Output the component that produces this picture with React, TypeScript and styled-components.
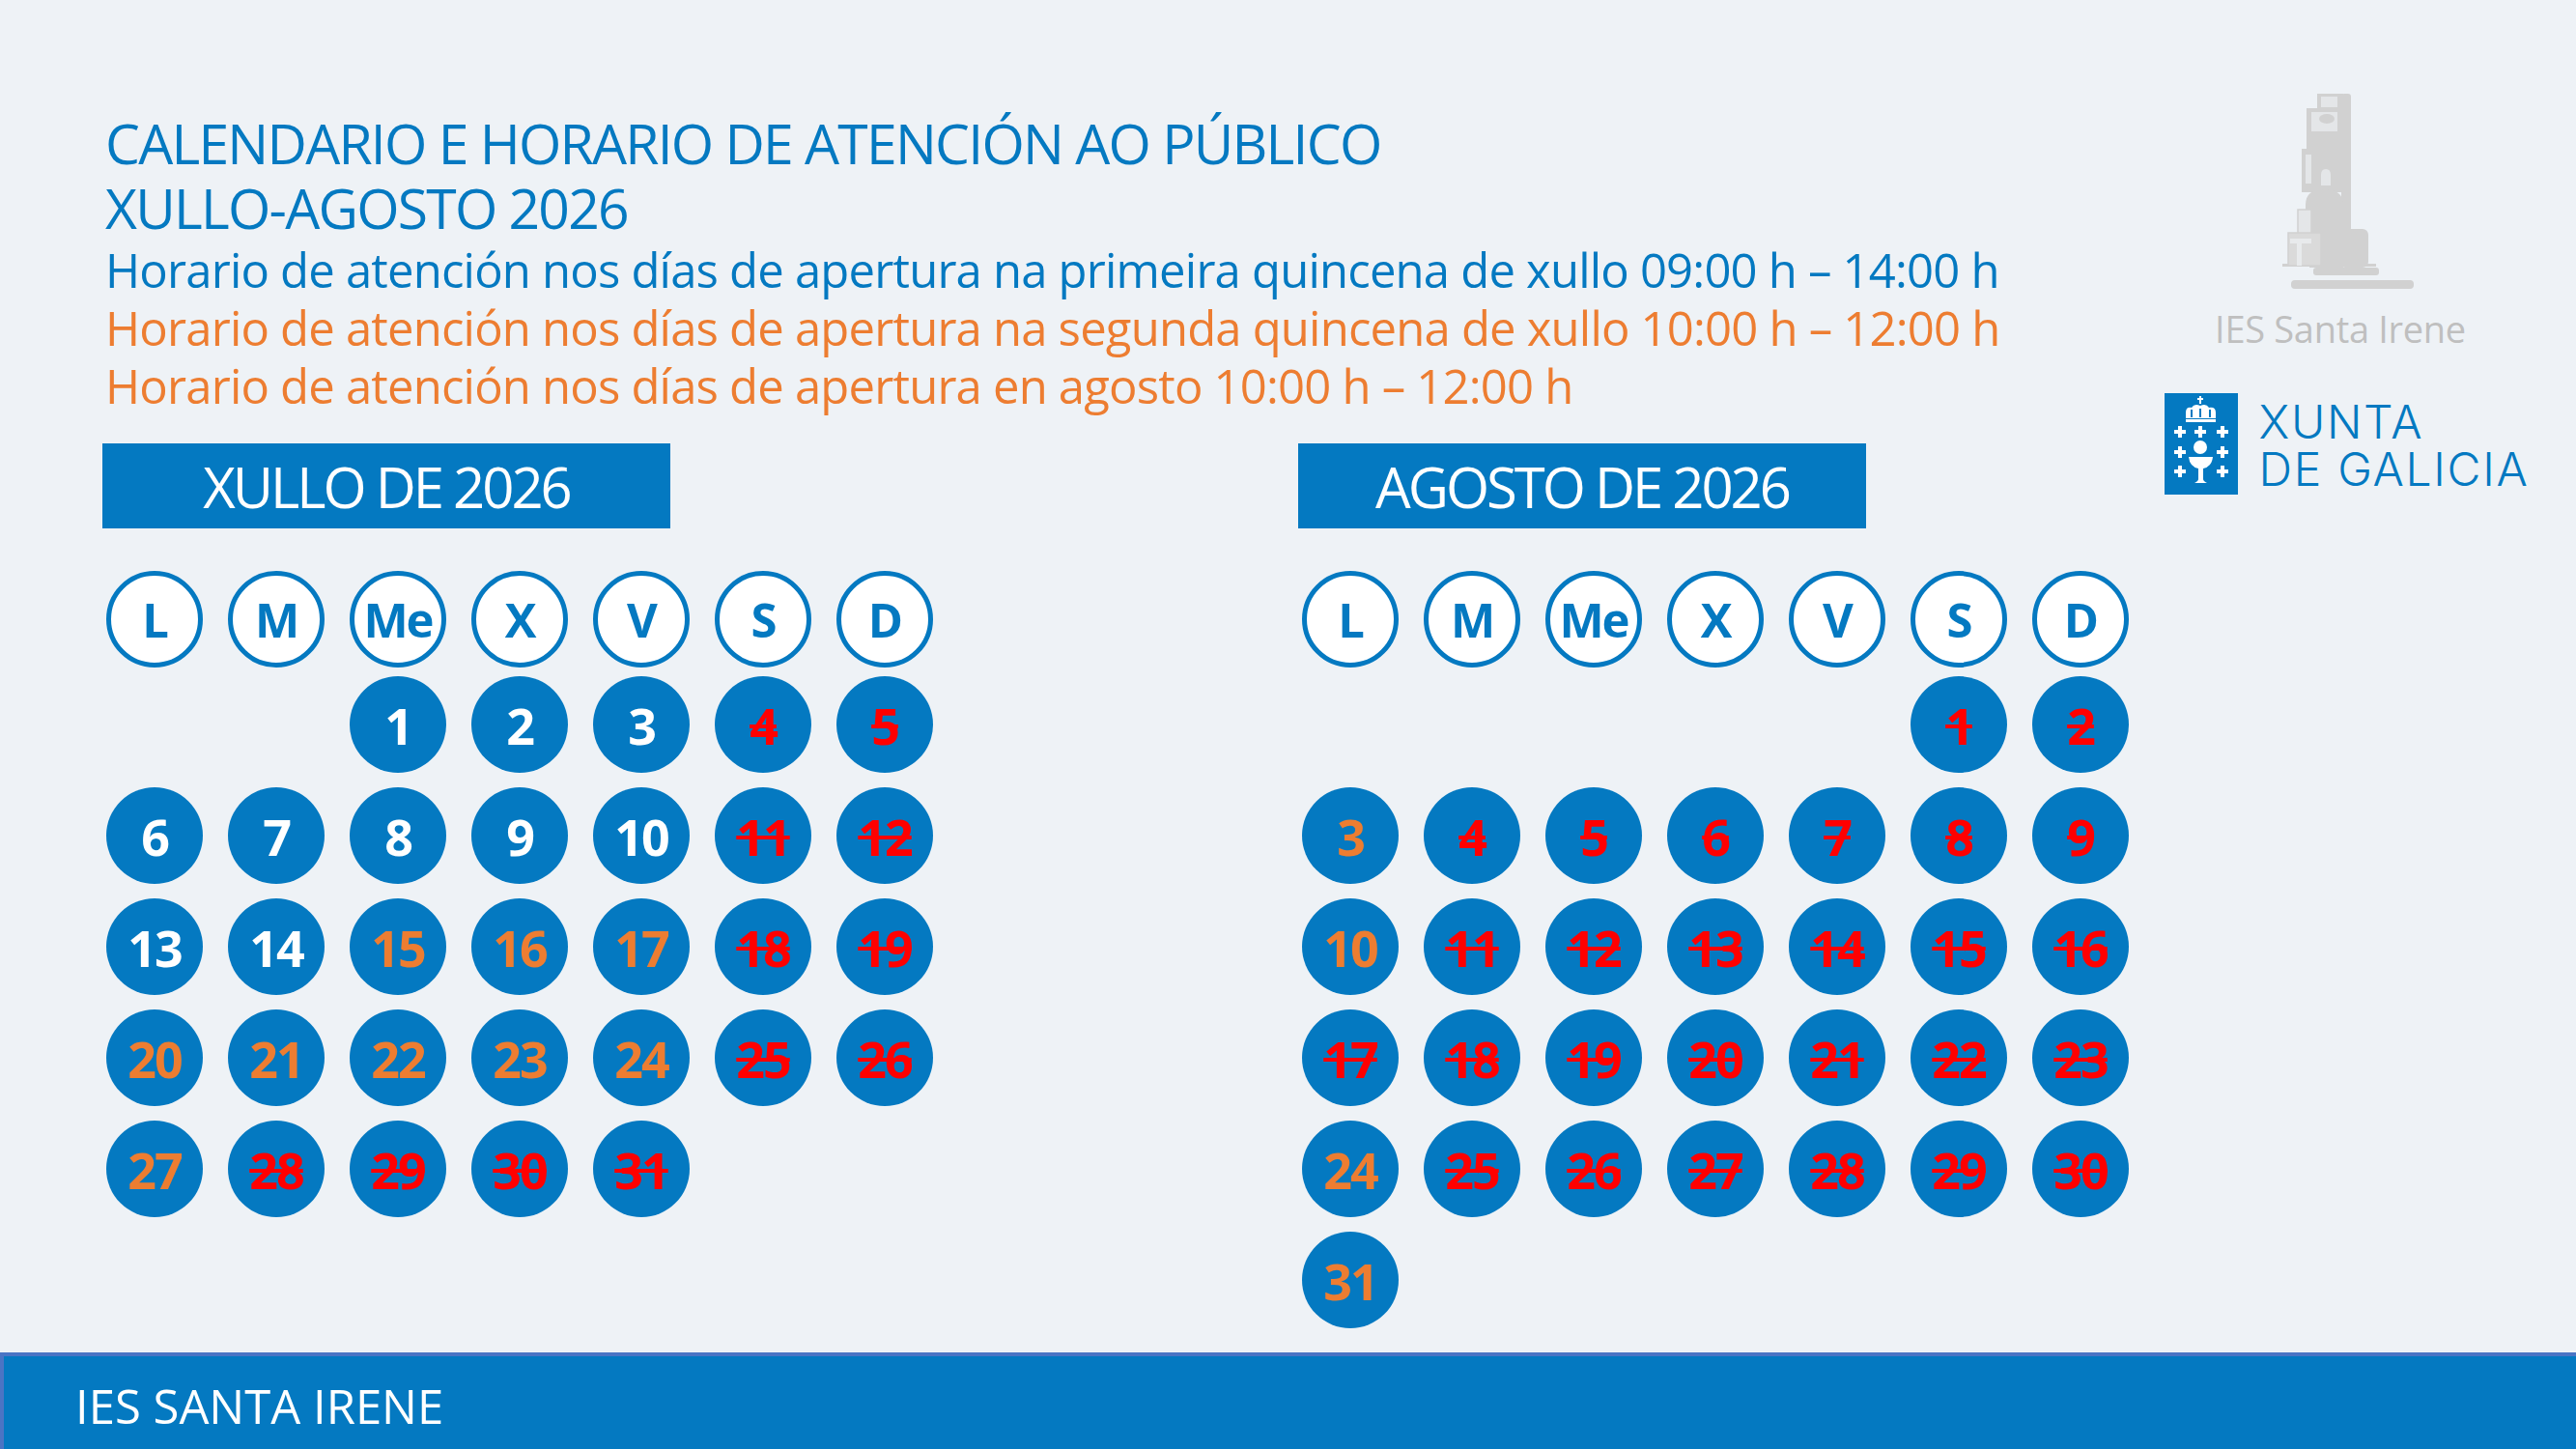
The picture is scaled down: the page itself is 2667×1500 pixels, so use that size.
import React from 'react';
import styled, { createGlobalStyle } from 'styled-components';

const BLUE = '#0479c1';
const ORANGE = '#ed7d31';
const RED = '#ff0000';

const GlobalStyle = createGlobalStyle`
    html, body {
        margin: 0;
        padding: 0;
        background: #eef2f6;
    }
    body {
        font-family: 'Open Sans', 'Noto Sans', sans-serif;
    }
`;

const Page = styled.div`
    width: 2667px;
    height: 1500px;
    display: flex;
    flex-direction: column;
    background: #eef2f6;
    overflow: hidden;
`;

const Main = styled.div`
    flex: 1;
    display: flex;
`;

const Content = styled.div`
    flex: 1;
    padding: 115px 0 0 106px;
`;

const Heading = styled.header`
    margin-left: 3px;
`;

const Title = styled.h1`
    margin: 0;
    font-size: 57px;
    line-height: 67px;
    font-weight: 400;
    letter-spacing: -1.75px;
    color: ${BLUE};
`;

const Schedule = styled.p<{ $tone: 'blue' | 'orange' }>`
    margin: 0;
    font-size: 49px;
    line-height: 60px;
    letter-spacing: -0.8px;
    color: ${p => (p.$tone === 'blue' ? BLUE : ORANGE)};
`;

const Calendars = styled.div`
    display: grid;
    grid-template-columns: 1238px 1fr;
    margin-top: 30px;
`;

const Month = styled.section`
    display: flex;
    flex-direction: column;
`;

const MonthTitle = styled.h2`
    margin: 0;
    width: 588px;
    height: 88px;
    box-sizing: border-box;
    display: flex;
    align-items: center;
    justify-content: center;
    background: ${BLUE};
    color: #fff;
    font-size: 58px;
    font-weight: 400;
    letter-spacing: -3px;
`;

const WeekHeader = styled.div`
    display: grid;
    grid-template-columns: repeat(7, 100px);
    column-gap: 26px;
    margin: 44px 0 9px 4px;
`;

const WeekDay = styled.div`
    width: 100px;
    height: 100px;
    box-sizing: border-box;
    border-radius: 50%;
    border: 5px solid ${BLUE};
    background: #fff;
    display: flex;
    align-items: center;
    justify-content: center;
    color: ${BLUE};
    font-size: 49px;
    font-weight: 700;
    letter-spacing: -2px;
`;

const DaysGrid = styled.div`
    display: grid;
    grid-template-columns: repeat(7, 100px);
    column-gap: 26px;
    row-gap: 15px;
    margin-left: 4px;
`;

type DayKind = 'open' | 'late' | 'closed';

const dayColors: Record<DayKind, string> = {
    open: '#ffffff',
    late: ORANGE,
    closed: RED,
};

const Day = styled.div<{ $kind: DayKind; $start?: number }>`
    width: 100px;
    height: 100px;
    border-radius: 50%;
    background: ${BLUE};
    display: flex;
    align-items: center;
    justify-content: center;
    grid-column-start: ${p => p.$start ?? 'auto'};
    color: ${p => dayColors[p.$kind]};
    font-size: 52px;
    font-weight: 700;
    letter-spacing: -2px;
    text-decoration: ${p => (p.$kind === 'closed' ? 'line-through' : 'none')};
    text-decoration-thickness: 4px;
    text-decoration-color: ${RED};
`;

const Aside = styled.aside`
    width: 400px;
    margin-right: 37px;
    padding-top: 90px;
    display: flex;
    flex-direction: column;
    align-items: center;
`;

const SchoolName = styled.div`
    margin: 7px 14px 0 0;
    font-size: 38px;
    line-height: 46px;
    letter-spacing: -0.3px;
    color: #bfbfbf;
`;

const Xunta = styled.div`
    margin-top: 44px;
    display: flex;
    align-items: flex-start;
    gap: 21px;
`;

const XuntaText = styled.div`
    padding-top: 5px;
    font-family: Inter, 'Noto Sans', sans-serif;
    font-weight: 300;
    font-size: 48px;
    line-height: 49px;
    letter-spacing: 1.7px;
    color: ${BLUE};
`;

const Footer = styled.footer`
    height: 100px;
    box-sizing: border-box;
    border: 4px solid #4a74c4;
    border-right: none;
    border-bottom: none;
    background: ${BLUE};
    display: flex;
    align-items: center;
    padding: 6px 0 0 74px;
    color: #fff;
    font-size: 49px;
`;

const WEEKDAYS = ['L', 'M', 'Me', 'X', 'V', 'S', 'D'];

interface MonthData {
    title: string;
    start: number; // weekday column of day 1
    length: number;
    late: number[];
    open: number[];
}

const months: MonthData[] = [
    {
        title: 'XULLO DE 2026',
        start: 3,
        length: 31,
        open: [1, 2, 3, 6, 7, 8, 9, 10, 13, 14],
        late: [15, 16, 17, 20, 21, 22, 23, 24, 27],
    },
    {
        title: 'AGOSTO DE 2026',
        start: 6,
        length: 31,
        open: [],
        late: [3, 10, 24, 31],
    },
];

const kindOf = (m: MonthData, d: number): DayKind =>
    m.open.includes(d) ? 'open' : m.late.includes(d) ? 'late' : 'closed';

const Tower = () => (
    <svg width="160" height="220" viewBox="0 0 160 220">
        <g fill="#d1d1d1">
            <rect x="74" y="7" width="10" height="142" rx="3" />
            <rect x="49" y="7" width="27" height="17" />
            <rect x="38" y="22" width="40" height="43" />
            <rect x="33" y="64" width="47" height="45" />
            <path d="M37 142 V122 Q37 106 56 106 Q76 106 76 122 V142 Z" />
            <rect x="41" y="127" width="35" height="60" />
            <rect x="72" y="147" width="30" height="40" rx="6" />
            <rect x="13" y="183" width="97" height="3" />
            <rect x="45" y="187" width="68" height="8" rx="3" />
            <rect x="22" y="200" width="127" height="9" rx="4" />
        </g>
        <g fill="#e4e6e8">
            <rect x="53" y="10" width="17" height="11" />
            <rect x="43" y="26" width="27" height="20" />
            <rect x="37" y="70" width="6" height="30" />
            <path d="M53 102 V91 Q53 85 58 85 Q63 85 63 91 V102 Z" />
        </g>
        <ellipse cx="59" cy="33" rx="8" ry="5" fill="#d1d1d1" />
        <rect x="29" y="127" width="14" height="25" fill="#e4e6e8" stroke="#d1d1d1" strokeWidth="1.5" />
        <rect x="19" y="151" width="34" height="34" fill="#dadada" stroke="#d1d1d1" strokeWidth="1.5" />
        <g fill="#e8eaec">
            <rect x="21" y="157" width="22" height="5" />
            <rect x="28" y="157" width="5" height="28" />
        </g>
    </svg>
);

const Plus = ({ x, y }: { x: number; y: number }) => (
    <g fill="#fff">
        <rect x={x - 6} y={y - 2} width="12" height="4" />
        <rect x={x - 2} y={y - 6} width="4" height="12" />
    </g>
);

const Emblem = () => (
    <svg width="76" height="105" viewBox="0 0 76 105">
        <rect width="76" height="105" fill={BLUE} />
        <rect x="36" y="3" width="2" height="8" fill="#fff" />
        <rect x="34" y="5" width="6" height="2" fill="#fff" />
        <path
            d="M22 26 V20 Q22 14 28 15 Q31 10 37 13 Q43 10 46 15 Q53 14 53 20 V26 Z"
            fill="#fff"
        />
        <g fill={BLUE}>
            <rect x="27" y="17" width="2" height="8" />
            <rect x="36" y="16" width="2" height="9" />
            <rect x="46" y="17" width="2" height="8" />
        </g>
        <rect x="22" y="27" width="31" height="3" fill="#fff" />
        {[
            [16, 40], [37, 40], [60, 40],
            [16, 61], [60, 61],
            [16, 81], [60, 81],
        ].map(([x, y]) => (
            <Plus key={`${x}-${y}`} x={x} y={y} />
        ))}
        <circle cx="37" cy="56" r="7" fill="#fff" />
        <path
            d="M25 66 H50 Q49 76 40 78 V89 Q40 91 44 93 H31 Q35 91 35 89 V78 Q26 76 25 66 Z"
            fill="#fff"
        />
    </svg>
);

export default function App() {
    return (
        <Page>
            <GlobalStyle />
            <Main>
                <Content>
                    <Heading>
                        <Title>
                            CALENDARIO E HORARIO DE ATENCIÓN AO PÚBLICO
                            <br />
                            XULLO-AGOSTO 2026
                        </Title>
                        <Schedule $tone="blue">
                            Horario de atención nos días de apertura na primeira quincena de xullo 09:00 h – 14:00 h
                        </Schedule>
                        <Schedule $tone="orange">
                            Horario de atención nos días de apertura na segunda quincena de xullo 10:00 h – 12:00 h
                        </Schedule>
                        <Schedule $tone="orange">
                            Horario de atención nos días de apertura en agosto 10:00 h – 12:00 h
                        </Schedule>
                    </Heading>

                    <Calendars>
                        {months.map(m => (
                            <Month key={m.title}>
                                <MonthTitle>{m.title}</MonthTitle>
                                <WeekHeader>
                                    {WEEKDAYS.map(w => (
                                        <WeekDay key={w}>{w}</WeekDay>
                                    ))}
                                </WeekHeader>
                                <DaysGrid>
                                    {Array.from({ length: m.length }, (_, i) => i + 1).map(d => (
                                        <Day key={d} $kind={kindOf(m, d)} $start={d === 1 ? m.start : undefined}>
                                            {d}
                                        </Day>
                                    ))}
                                </DaysGrid>
                            </Month>
                        ))}
                    </Calendars>
                </Content>

                <Aside>
                    <Tower />
                    <SchoolName>IES Santa Irene</SchoolName>
                    <Xunta>
                        <Emblem />
                        <XuntaText>
                            XUNTA
                            <br />
                            DE GALICIA
                        </XuntaText>
                    </Xunta>
                </Aside>
            </Main>
            <Footer>IES SANTA IRENE</Footer>
        </Page>
    );
}
